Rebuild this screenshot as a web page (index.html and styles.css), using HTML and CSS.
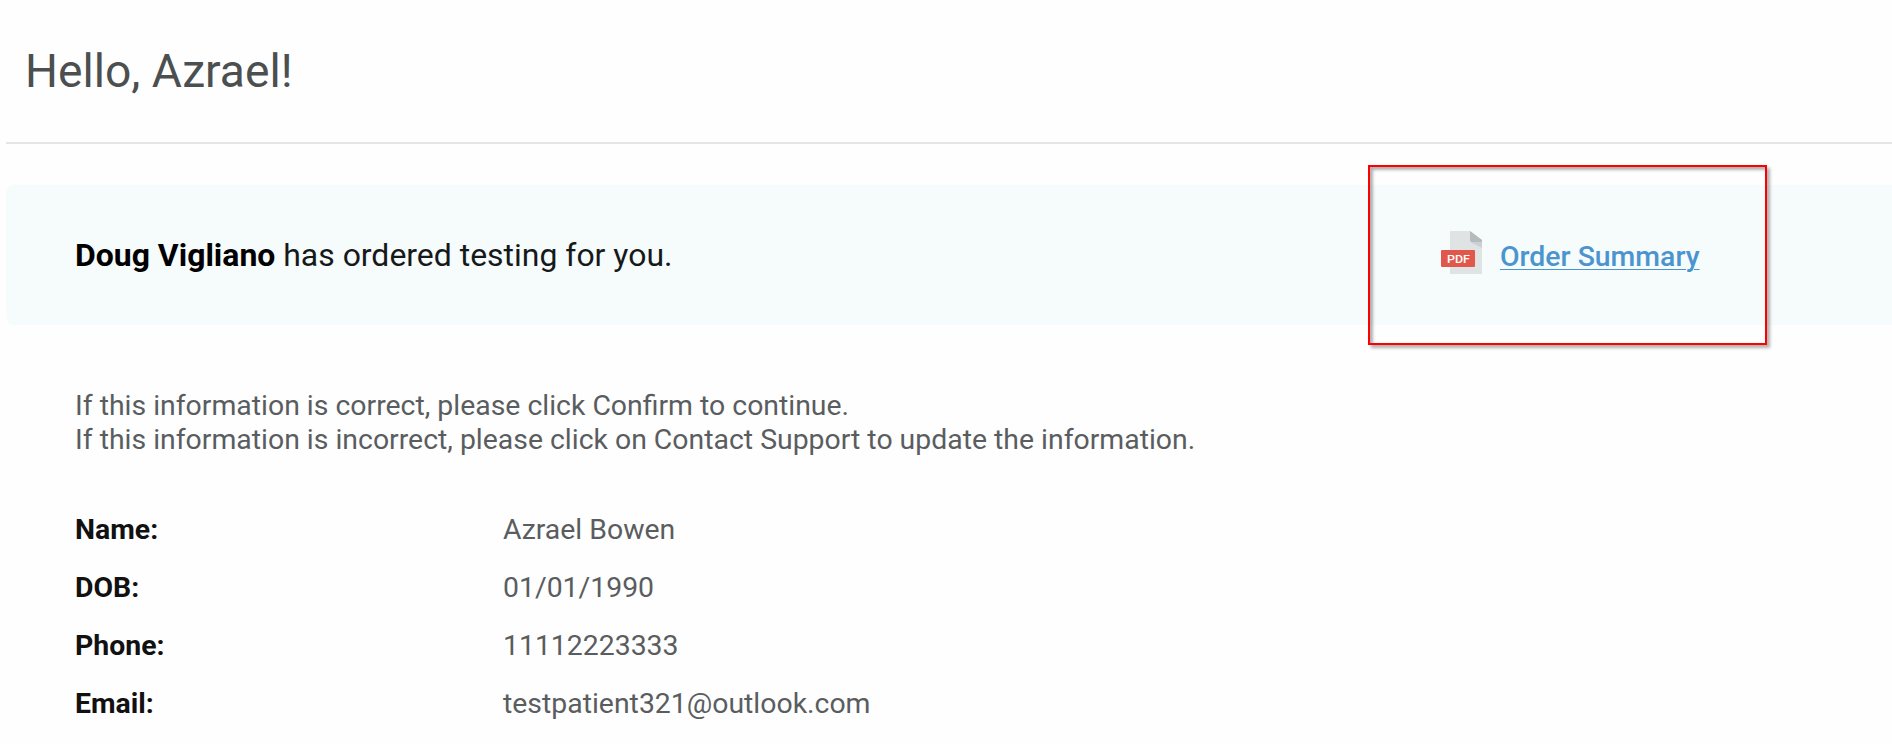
FILE: index.html
```
<!DOCTYPE html>
<html lang="en">
<head>
    <meta charset="UTF-8">
    <meta name="viewport" content="width=device-width, initial-scale=1.0">
    <title>Order Confirmation</title>
    <link rel="stylesheet" href="styles.css">
</head>
<body>
    <header class="page-header">
        <h1 class="greeting">Hello, Azrael!</h1>
    </header>

    <main>
        <section class="order-banner">
            <p class="order-text"><strong>Doug Vigliano</strong> has ordered testing for you.</p>
            <div class="order-summary">
                <svg class="pdf-icon" width="42" height="46" viewBox="0 0 42 46">
                    <path d="M9 1h20l12 9v34H9z" fill="#dfe3e4"/>
                    <path d="M29 12h12v6z" fill="#cbd0d3"/>
                    <path d="M29 1l12 9v2H31q-2 0-2-2z" fill="#b4babd"/>
                    <rect x="0" y="20" width="34" height="17" rx="1" fill="#e2574c"/>
                    <text class="pdf-label" x="6" y="33" textLength="23" lengthAdjust="spacingAndGlyphs">PDF</text>
                </svg>
                <a class="summary-link" href="#">Order Summary</a>
                <div class="highlight"></div>
            </div>
        </section>

        <section class="details">
            <p class="instructions">
                If this information is correct, please click Confirm to continue.<br>
                If this information is incorrect, please click on Contact Support to update the information.
            </p>
            <dl class="patient-info">
                <dt>Name:</dt>
                <dd>Azrael Bowen</dd>
                <dt>DOB:</dt>
                <dd>01/01/1990</dd>
                <dt>Phone:</dt>
                <dd>11112223333</dd>
                <dt>Email:</dt>
                <dd>testpatient321@outlook.com</dd>
            </dl>
        </section>
    </main>
</body>
</html>
```

FILE: styles.css
```
* {
    box-sizing: border-box;
}

body {
    margin: 0;
    padding-left: 6px;
    background-color: #fefefe;
    color: #5a5d5f;
    font-family: Roboto, Arial, sans-serif;
    font-size: 28.4px;
    line-height: 34px;
    overflow: hidden;
}

.page-header {
    height: 144px;
    padding: 43px 0 0 19px;
    border-bottom: 2px solid #e4e5e5;
}

.greeting {
    margin: 0;
    color: #4b4f50;
    font-size: 46.2px;
    font-weight: 400;
    line-height: 56px;
}

.order-banner {
    display: flex;
    align-items: center;
    height: 140px;
    margin-top: 41px;
    padding-left: 69px;
    border-radius: 8px 0 0 8px;
    background-color: #f6fbfb;
}

.order-text {
    flex: 0 0 1366px;
    margin: 0;
    color: #16191a;
    font-size: 31.95px;
    line-height: 38px;
}

.order-text strong {
    color: #000;
    font-weight: 700;
}

.order-summary {
    position: relative;
    display: flex;
    align-items: center;
    height: 50px;
    gap: 17px;
}

.pdf-icon {
    display: block;
    margin-bottom: 4px;
}

.pdf-label {
    fill: #fff;
    font-size: 10px;
    font-weight: 500;
}

.summary-link {
    padding-top: 4px;
    color: #4a94d0;
    font-weight: 500;
    text-decoration: underline;
    text-decoration-thickness: 1px;
    text-underline-offset: 3px;
}

.highlight {
    position: absolute;
    top: -65px;
    left: -73px;
    width: 399px;
    height: 180px;
    border: 2px solid #f00;
    box-shadow: 3px 3px 3px rgba(0, 0, 0, 0.3), inset 3px 3px 3px rgba(0, 0, 0, 0.3);
    pointer-events: none;
}

.details {
    padding: 64px 0 0 69px;
}

.instructions {
    margin: 0 0 55.6px;
}

.patient-info {
    display: grid;
    grid-template-columns: 428px 1fr;
    row-gap: 24.2px;
    margin: 0;
}

.patient-info dt {
    color: #111;
    font-weight: 700;
}

.patient-info dd {
    margin: 0;
}
```
